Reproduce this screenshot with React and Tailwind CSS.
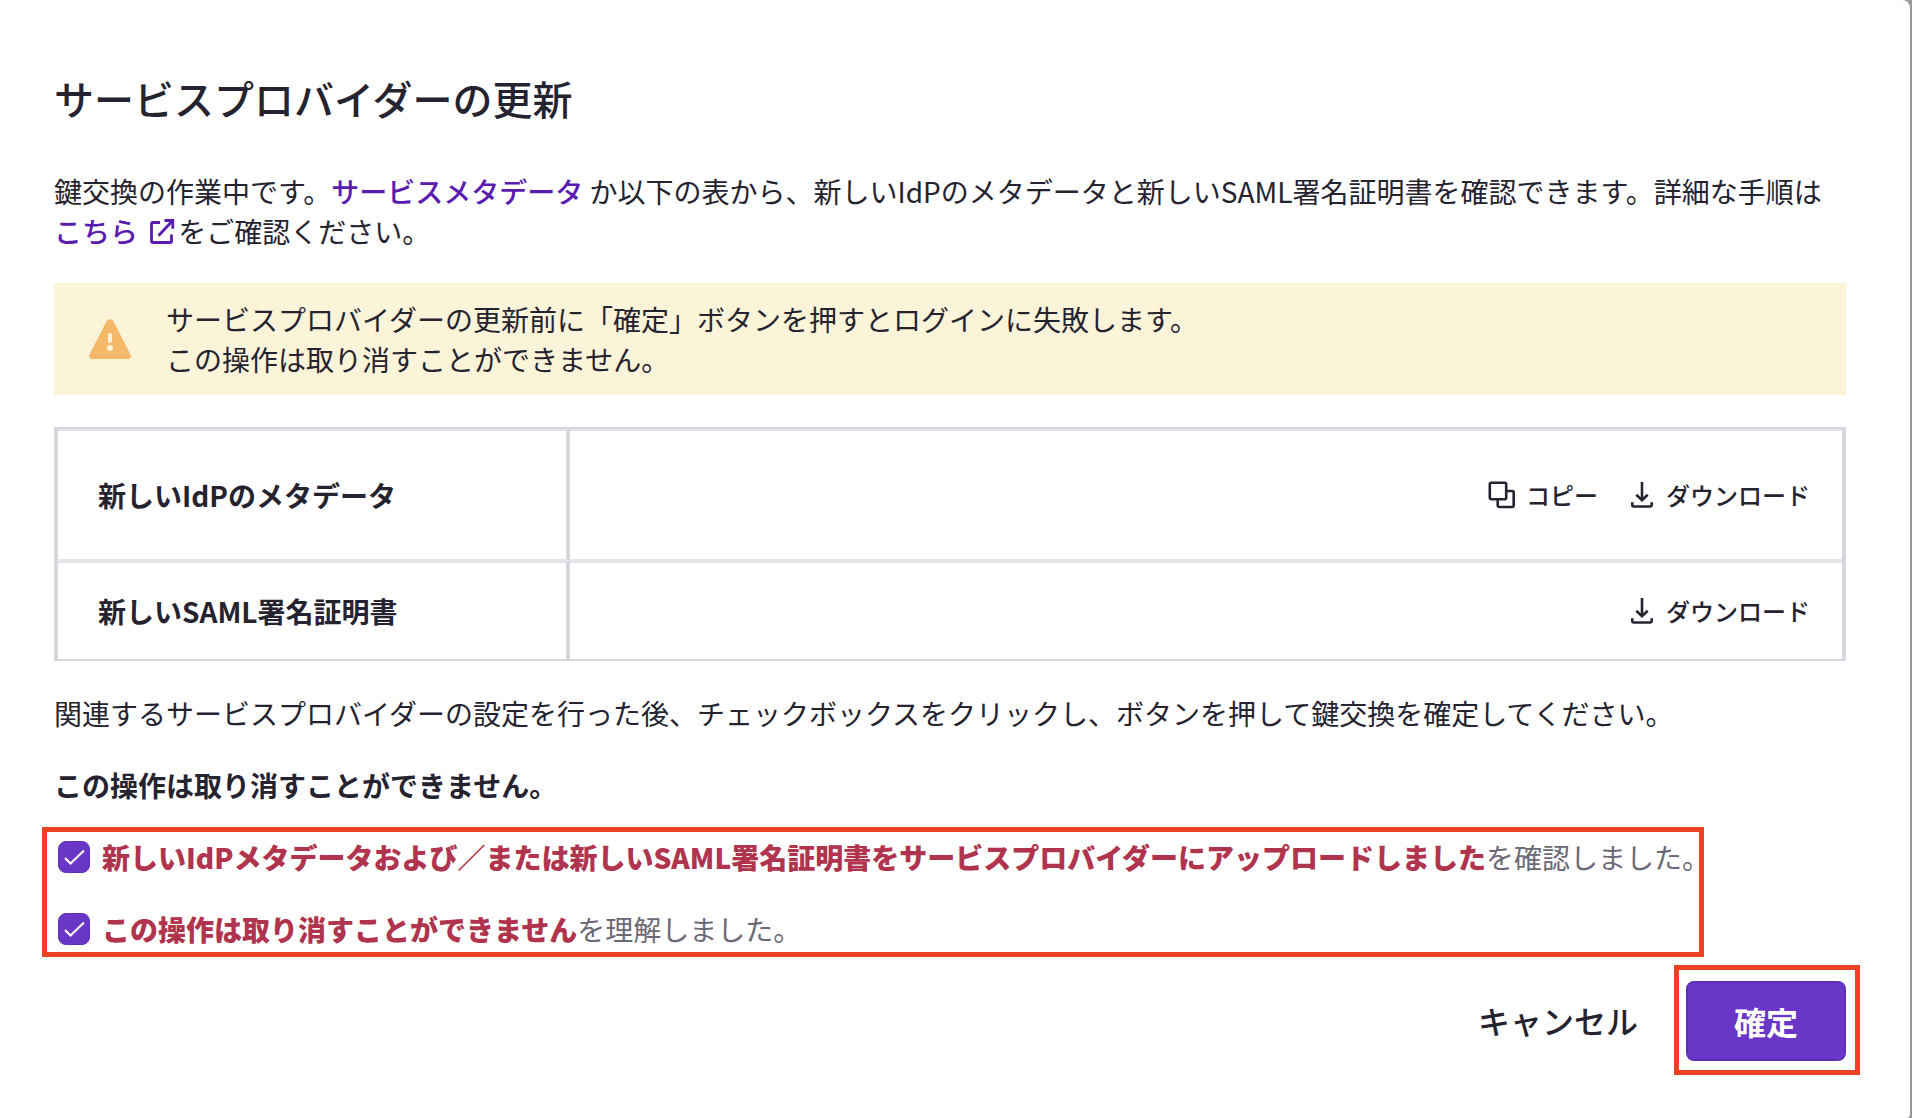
import { useState } from "react";

const ROWS = [
  { id: "idp", label: "新しいIdPのメタデータ", copy: true, height: "h-[132px]" },
  { id: "saml", label: "新しいSAML署名証明書", copy: false, height: "h-[98px]" },
];

const CHECKS = [
  {
    id: "uploaded",
    strong:
      "新しいIdPメタデータおよび／または新しいSAML署名証明書をサービスプロバイダーにアップロードしました",
    rest: "を確認しました。",
  },
  {
    id: "irreversible",
    strong: "この操作は取り消すことができません",
    rest: "を理解しました。",
  },
];

export default function App() {
  const [checked, setChecked] = useState({ uploaded: true, irreversible: true });

  const toggle = (id) => setChecked((c) => ({ ...c, [id]: !c[id] }));

  return (
    <div
      lang="ja"
      className="min-h-screen overflow-hidden bg-[#98979e] pr-0.5 font-['Noto_Sans_CJK_JP',sans-serif] text-[28px] leading-10 text-[#25232f]"
    >
      <main className="min-h-screen rounded-tr-lg rounded-br-sm bg-white pt-[68px] pr-16 pb-10 pl-[54px]">
        <h1 className="text-[40px] font-medium leading-[60px]">
          サービスプロバイダーの更新
        </h1>

        <p className="mt-[43px]">
          鍵交換の作業中です。
          <a href="#metadata" className="font-medium text-[#5a1bb0]">
            サービスメタデータ
          </a>{" "}
          か以下の表から、新しいIdPのメタデータと新しいSAML署名証明書を確認できます。詳細な手順は
          <a href="#guide" className="font-medium text-[#5a1bb0]">
            こちら <ExternalIcon />
          </a>
          をご確認ください。
        </p>

        <div role="alert" className="mt-8 flex items-center bg-[#fcf4d9] py-4 pl-8">
          <WarningIcon />
          <p className="ml-8">
            サービスプロバイダーの更新前に「確定」ボタンを押すとログインに失敗します。
            <br />
            この操作は取り消すことができません。
          </p>
        </div>

        <table className="mt-8 w-full border-separate border-spacing-0 border-x-4 border-y-2 border-[#d7d5dd]">
          <tbody>
            {ROWS.map((row, i) => (
              <tr key={row.id} className={row.height}>
                <th
                  scope="row"
                  className={`w-[512px] border-r-4 border-r-[#d7d5dd] pl-10 text-left font-bold ${
                    i === 0 ? "border-y-2 border-y-[#e5e3ea]" : "border-t-2 border-t-[#e5e3ea]"
                  }`}
                >
                  {row.label}
                </th>
                <td
                  className={`pr-8 ${
                    i === 0 ? "border-y-2 border-y-[#e5e3ea]" : "border-t-2 border-t-[#e5e3ea]"
                  }`}
                >
                  <div className="flex justify-end gap-7 text-2xl font-medium">
                    {row.copy && (
                      <button type="button" className="flex items-center gap-2">
                        <CopyIcon />
                        コピー
                      </button>
                    )}
                    <button type="button" className="flex items-center gap-2">
                      <DownloadIcon />
                      ダウンロード
                    </button>
                  </div>
                </td>
              </tr>
            ))}
          </tbody>
        </table>

        <p className="mt-8">
          関連するサービスプロバイダーの設定を行った後、チェックボックスをクリックし、ボタンを押して鍵交換を確定してください。
        </p>
        <p className="mt-8 font-bold">この操作は取り消すことができません。</p>

        <div className="-ml-3 mt-[22px] flex w-fit flex-col gap-8 border-5 border-[#ec4125] pt-[5px] pb-[3px] pl-[11px]">
          {CHECKS.map((item) => (
            <div key={item.id} className="flex items-center gap-3">
              <span className="relative size-8 shrink-0">
                <input
                  id={item.id}
                  type="checkbox"
                  checked={checked[item.id]}
                  onChange={() => toggle(item.id)}
                  className="block size-8 appearance-none rounded-lg border border-[#5e30b5] checked:bg-[#6936c8]"
                />
                {checked[item.id] && <CheckIcon />}
              </span>
              <label htmlFor={item.id} className="-mr-[11px] whitespace-nowrap text-[#6b6976]">
                <strong className="font-black text-[#b0344d]">{item.strong}</strong>
                {item.rest}
              </label>
            </div>
          ))}
        </div>

        <div className="-mr-3.5 mt-2 flex items-center justify-end gap-9 text-[32px]">
          <button type="button" className="font-medium">
            キャンセル
          </button>
          <div className="border-5 border-[#ec4125] pt-[11px] pr-[9px] pb-[9px] pl-[7px]">
            <button
              type="button"
              className="block h-20 w-40 rounded-lg border-2 border-[#5e30b5] bg-[#6936c8] font-bold text-white"
            >
              確定
            </button>
          </div>
        </div>
      </main>
    </div>
  );
}

/* ---------- Icons ---------- */

function ExternalIcon() {
  return (
    <svg
      viewBox="0 0 28 28"
      className="mr-0.5 ml-1 inline size-7 align-[-3px]"
      fill="none"
      stroke="currentColor"
      strokeWidth="2.8"
      aria-hidden="true"
    >
      <path d="M12 4.500H5A1.500 1.500 0 0 0 3.500 6v17A1.500 1.500 0 0 0 5 24.500h17a1.500 1.500 0 0 0 1.500-1.500v-6.500" />
      <path d="M16.500 2.500h8.300v8.300M24.800 2.500 10.500 17.800" />
    </svg>
  );
}

function WarningIcon() {
  return (
    <svg viewBox="0 0 48 48" className="size-12 shrink-0" aria-hidden="true">
      <path
        d="M20.5 6.200a4 4 0 0 1 7 0l17 33.300c1.200 2.400-.2 4.500-2.800 4.500H6.300c-2.600 0-4-2.100-2.800-4.500z"
        fill="#f4b96a"
      />
      <path d="M24 20v6" stroke="#fcf4d9" strokeWidth="4" strokeLinecap="round" />
      <circle cx="24" cy="33" r="3" fill="#fcf4d9" />
    </svg>
  );
}

function CopyIcon() {
  return (
    <svg viewBox="0 0 32 32" className="size-8" fill="none" stroke="currentColor" strokeWidth="2.6" aria-hidden="true">
      <rect x="3.800" y="3.800" width="16.400" height="16.400" rx="1.500" />
      <path d="M20.200 12h6a1.500 1.500 0 0 1 1.500 1.500v13a1.500 1.500 0 0 1-1.500 1.500h-13a1.500 1.500 0 0 1-1.500-1.500v-6.300" />
    </svg>
  );
}

function DownloadIcon() {
  return (
    <svg viewBox="0 0 32 32" className="size-8" fill="none" stroke="currentColor" strokeWidth="2.6" aria-hidden="true">
      <path d="M16 3v18" />
      <path d="m10.300 15.800 5.700 5.500 5.700-5.500" />
      <path d="M6.300 23.300V26a1.500 1.500 0 0 0 1.500 1.500h16.400a1.500 1.500 0 0 0 1.500-1.500v-2.700" />
    </svg>
  );
}

function CheckIcon() {
  return (
    <svg
      viewBox="0 0 32 32"
      className="pointer-events-none absolute inset-0 size-8"
      fill="none"
      stroke="white"
      strokeWidth="2"
      aria-hidden="true"
    >
      <path d="m7 17 5.500 5.500L26 9.500" />
    </svg>
  );
}
